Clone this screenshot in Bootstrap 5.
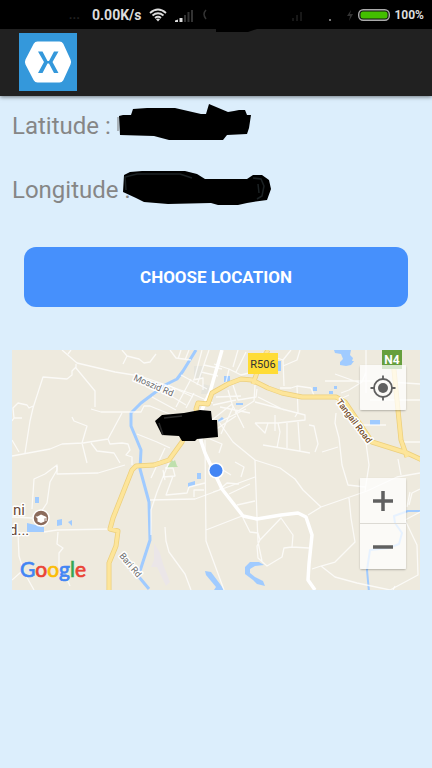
<!DOCTYPE html>
<html lang="en">
<head>
<meta charset="utf-8">
<meta name="viewport" content="width=device-width, initial-scale=1">
<title>Choose location</title>
<link href="https://cdn.jsdelivr.net/npm/bootstrap@5.3.0/dist/css/bootstrap.min.css" rel="stylesheet">
<style>
  body { background: #dceefc; font-family: Roboto, "Liberation Sans", sans-serif; }
  .status-bar { background: #000; color: #dcdcdc; height: 29px; font-size: 14px; font-weight: 700; line-height: 16px; padding: 1px 8px 0; }
  .status-faint { color: #222; font-size: 13px; flex: 0 0 76px; }
  .status-pct { font-size: 12px; }
  .app-bar { background: #212121; height: 67px; padding: 0 19px 1px; box-shadow: 0 1px 4px rgba(0,0,0,.5); }
  .page-body { padding: 14px 12px 0; }
  .coord { height: 32px; line-height: 32px; font-size: 24px; color: #868686; margin-bottom: 32px; }
  .coord svg { top: -6px; left: 104px; }
  .btn-choose { --bs-btn-bg: #4690fc; --bs-btn-color: #fff; --bs-btn-hover-bg: #3580ee; --bs-btn-hover-color: #fff; --bs-btn-active-bg: #3580ee; --bs-btn-active-color: #fff; height: 60px; border: 0; border-radius: 12px; font-size: 17px; font-weight: 700; padding: 8px 0 6px; }
  .choose-wrap { padding: 9px 12px 43px; }
  .map-view { height: 240px; background: #eeeade; }
  .map-view text { font-family: Roboto, "Liberation Sans", sans-serif; }
  .map-view .map-brand { font-family: Lato, "Liberation Sans", sans-serif; }
  .map-btn { width: 46px; height: 45px; border: 0; background: rgba(255,255,255,.75); }
  .map-panel { right: 14px; border-radius: 2px; box-shadow: 0 1px 2px rgba(0,0,0,.25); }
  .panel-top { top: 15px; }
  .panel-bottom { bottom: 21px; }
  .zoom-in { border-bottom: 1px solid #dcdad4; height: 46px; }
</style>
<script src="https://cdn.jsdelivr.net/npm/bootstrap@5.3.0/dist/js/bootstrap.bundle.min.js"></script>
</head>
<body>
<div class="status-bar d-flex align-items-center">
  <span class="status-faint text-end pe-1 me-2">...</span>
  <span class="me-2">0.00K/s</span>
  <svg width="18" height="14" viewBox="0 0 18 14" fill="none" stroke="#ddd" stroke-width="1.8" aria-label="Wi-Fi"><path d="M1 5Q9-2 17 5M3.500 7.500Q9 3 14.500 7.500M6 10Q9 7.500 12 10"/><path d="M7 11.200Q9 9.800 11 11.200L9 13.500Z" fill="#ddd" stroke="none"/></svg>
  <svg class="ms-2" width="19" height="13" viewBox="0 0 19 13" aria-label="Signal"><path d="M0 13v-1.500l3-1V13z M4.500 13V9h3v4z" fill="#ddd"/><path d="M9 13V6h2v7zM12.500 13V3h2v10zM16 13V1h2v12z" fill="#333"/></svg>
  <svg class="ms-2 flex-fill" width="150" height="16" viewBox="0 0 150 16" preserveAspectRatio="xMaxYMid meet" aria-hidden="true"><path d="M2 3Q-2 7 2 12" stroke="#333" fill="none" stroke-width="1.500"/><path d="M88 14v-3h2v3zM92 14V8h2v6zM96 14V5h2v9z" fill="#181818"/><rect x="125" y="12" width="2" height="2" fill="#777"/><path d="M147 3l-4 6h3l-1 5 4-7h-3z" fill="#333"/></svg>
  <svg class="ms-1" width="32" height="12" viewBox="0 0 32 12" aria-label="Battery"><rect x=".7" y=".7" width="30.600" height="10.600" rx="4.500" fill="#111" stroke="#aaa" stroke-width="1.400"/><rect x="2.500" y="2.500" width="27" height="7" rx="2.500" fill="#43be00"/></svg>
  <span class="ms-1 status-pct">100%</span>
</div>
<header class="app-bar d-flex align-items-center position-relative">
  <svg width="58" height="58" viewBox="0 0 58 58" role="img" aria-label="App logo"><rect width="58" height="58" fill="#3498db"/><path d="M18.500 8.500h22Q43 8.500 44.300 10.800L51.500 26.500Q52.700 29 51.500 31.500L44.300 47.200Q43 49.500 40.500 49.500H18.500Q16 49.500 14.700 47.200L6.500 31.500Q5.300 29 6.500 26.500L14.700 10.800Q16 8.500 18.500 8.500z" fill="#fff"/><path d="M19 18.500h4.500L28.500 28h1.500L35 18.500h4.500L33.500 29l6 11H35l-5-9.500h-1.500L23.500 40H19l6-11z" fill="#3498db"/></svg>
  <svg class="position-absolute top-0 start-50" width="50" height="4" viewBox="0 0 50 4" aria-hidden="true"><path d="M0 0h41l-9 3H0z" fill="#000"/></svg>
</header>
<main class="page-body">
  <div class="coord position-relative">Latitude :
    <svg class="position-absolute" width="160" height="40" viewBox="116 104 160 40" aria-hidden="true"><path d="M119 116l4-1 8 0 2-6 14-1h28l26 6 5 0 3-10 19 8 6-1 5-1 6 0 2 5 4 0-2 13-2 6-20 1-4 5h-54l-15-4-34-1z" fill="#000"/><path d="M118 117v14" stroke="#777" stroke-opacity=".5" stroke-width="2"/></svg>
  </div>
  <div class="coord position-relative">Longitude :
    <svg class="position-absolute" width="160" height="40" viewBox="116 168 160 40" aria-hidden="true"><path d="M124 175l6-3 12-1h43l12 3 8 5 42 0 6-4 9 0 7 5 2 9-4 11-14 2-6 1-9 2h-20l-7-2-43 1-24-2-8-4-13-6z" fill="#000"/><path d="M126 190l-1-13 12-3h43l12 4M253 178l8 1 3 7-2 10-5 3M258 184l1 9" fill="none" stroke="#1c2224" stroke-width="1.500"/></svg>
  </div>
  <div class="choose-wrap"><button type="button" class="btn btn-choose w-100">CHOOSE LOCATION</button></div>
  <section class="map-view position-relative overflow-hidden" aria-label="Map">
    <svg class="d-block w-100 h-100" viewBox="12 350 408 240" preserveAspectRatio="xMidYMid slice">
      <g fill="#a0cbff">
        <path d="M334 350h17l-1 5 3 3-1 3 2 0-3 4-5 1-6-1v-3l3-3-2-5-6-1z"/>
        <path d="M370 420h10v5h-10zM313 387h4v4h-4zM329 391h4v3h-4zM334 386h3v3h-3zM329 396h3v3h-3zM224 376h6v6h-6zM236 403h7v2h-7zM218 420l4-3 2 2-5 4zM278 361h3v10h-3zM188 483l7-2v4l-7 2zM197 473h4v6h-4zM35 497h4v6h-4zM27 523l17 4v5H27zM57 520l5-1v6l-5 1zM68 522l4-2v6z"/>
        <path d="M205 571l6 1 9 12 4 6h-10l2-3-10-12z"/>
        <path d="M264 565l-5-3-9 0-5 5 0 7 8 6 4 4 8 2-2-5-8-4-5-4 0-4 5-3z"/>
      </g>
      <path d="M154 543l6 10 3 11 7 18-4 4-9-19-6 0 3-7z" fill="#ebe6e8"/>
      <path d="M194 366h9l-1 12h-8zM203 384l8 2-2 8-8 0z" fill="#e5e4dc"/>
      <path d="M167 468l5-8 6 7-3 0zM171 463l4-3 2 6z" fill="#bfe0ad"/>
      <g fill="none" stroke="#a0cbff" stroke-linejoin="round">
        <path d="M196 350l-13 21-6 8-12 6-24 18-10 10v13l10 24-1 19 9 33 1 38-10 31-1 6 10 12" stroke-width="3"/>
        <path d="M420 511h-12l-14 5 1 7 7 10-3 11-10 4-19 2-3 20 2 22" stroke-width="2"/>
      </g>
      <g fill="none" stroke="#fff" stroke-opacity=".75" stroke-width="1.300" stroke-linejoin="round">
        <path d="M62 350l15 13 38 9 25 4 55 19 18 8M71 350l-3 4M76 364l0 4 19 23v16M76 367l-4 4 0 4-5 4-24-2-10 31-3 13-5 32M12 456l38-7 12-5 21-1 25-4 14-26M12 440l7 12M12 421l2-3h8M14 418l-1-10 5-5 9 2 2 3 4-2M72 417l2 4 13 5-5 17 5 20M91 409l10 3h40l3-6 6 0 22 9M91 443l6 8 17 2 6 10M108 439l2 5 12-1 6 1 2 6-4 5 6 2v8M45 474l12-9v9l41-1 27-8M122 350l5 6 12 3 5 4 6-1 6-8M127 356l-4 8"/>
        <path d="M57 466v4l-7 12-3 21-6 9M45 474l-11 5-2 30M12 517l20 1M44 532l13-2 55-1M58 532l-1 12 6 4-4 5v14l8 12 3 7M18 534l1 22 5 16 10 18M12 580l9-8"/>
        <path d="M137 434l20 8 13 6M165 448l-14 30M169 462l-12 30-6 18v25"/>
        <path d="M152 397l24 13M161 390l25 15M168 385l25 12M181 375l26 14M170 350l6 8 15 2M181 350l-3 9M189 350l-4 10M176 407l15-28M186 408l8-15M193 380l10-2v12M202 350l-8 30M209 350l-12 35M204 365l18 4M201 372l17 4"/>
        <path d="M214 364l15 5-4 18M229 369l12 6 8-2M238 350l-5 17M246 352l-10 20M258 364l16 5M262 353l21 7M228 390l5 17-12 27M216 397l25-1M213 405l23-5M233 385l5 15 18-3 1-8M255 385l-1 16-19 12M220 407l30 6M212 420l20-16 12 24M219 422l27-13M206 433l12-5 18-12M210 439l12 5-3 9"/>
        <path d="M280 388l11 0 6-2 14 2 4 10M297 386l1 26-3 5M291 350l-8 10 1 26M300 350l-3 10-14 6M255 402l50 13v5l-27 3h-23M275 415v16M255 423l10 10 3-10M278 423l2 9-3 16M287 423v25M298 422l2 29M309 425l5 1 4 18-3 8M263 445l36 6 11 2M322 452l16-5M258 397l26 13"/>
        <path d="M341 393l8-3 13-8 4-10v-22M335 374l25 9M336 401l13-6M336 413l-1 10 4 15 3 27 6 20 17 2M366 443l3 22-4 26M366 393v-43M325 381h50l45 3M370 400h50M360 425h26M404 442h16M398 459l3 16"/>
        <path d="M219 422l14 20 22 18 25 8 15 11 8 11 18 17M308 515l13-8 46-16 30-14 23-4M255 460l2 58 1 24 4 19M205 440l1 101 18 49M206 530l36-14M243 518l7 14 8 1 2 7M260 540l21-22 12 17-1 12 17 1M260 540l-3 6 1 12 9 8 15-9 2-9 8-1M349 498l2 20 4 24-20 20-14 4-9 3M321 566l14 11 22 6 33 7 28-15-1-30-12-25 15-8"/>
        <path d="M163 470l2 10M165 468l8 0 2 8-12 1M173 476l-7 19 21-2 2-6 16-4M150 500l45-1 60-22M194 497v-7h10M213 492l6-2 8-7 12 1M229 494l21-10M237 505l18-4M223 470l8 5M235 462l9 5-3 10M165 527l1 14 3 11 16 22 6 16M409 505l3-12 8-4M410 492l-3 15M393 590l2-4"/>
      </g>
      <path d="M222 350l-12 42-9 20 0 29 4 12 17 36 21 27 14 3 24-4 17-2 8 4 6 18-3 29-1 16 7 10" fill="none" stroke="#fff" stroke-width="3.500" stroke-linejoin="round"/>
      <g fill="none" stroke-linejoin="round">
        <path d="M109 590v-27l7-17 2-15-8-2 3-11 19-48 4-4 18-1 15-5 13-18 15-30-1-3 2-6 10 1 4-11 16-9 13-5 11 1 16 8 14 5 20 4h34l9 5 27 40 35 11 15 7M392 350l5 50 4 40 6 17M253 384l7-20 8-14" stroke="#eccf7c" stroke-width="5"/>
        <path d="M109 590v-27l7-17 2-15-8-2 3-11 19-48 4-4 18-1 15-5 13-18 15-30-1-3 2-6 10 1 4-11 16-9 13-5 11 1 16 8 14 5 20 4h34l9 5 27 40 35 11 15 7M392 350l5 50 4 40 6 17M253 384l7-20 8-14" stroke="#fde59a" stroke-width="3.500"/>
      </g>
      <g stroke="#fff" stroke-width="3" stroke-linejoin="round" paint-order="stroke">
        <text transform="translate(133 380) rotate(23)" font-size="9" fill="#6b6b6b">Moszid Rd</text>
        <text transform="translate(119 556) rotate(50)" font-size="9" fill="#6b6b6b">Bari Rd</text>
        <text transform="translate(336 402) rotate(53)" font-size="9" font-weight="500" fill="#754f2d">Tangail Road</text>
        <text x="13" y="515" font-size="15" fill="#6b4c3a">ni</text>
        <text x="9" y="535" font-size="15" fill="#6b4c3a">d...</text>
      </g>
      <path d="M155 421l7-6 22-2 16-3 11 1 1 9 5 0 1 17-21 2-2 2h-13l-3-5-17-1z"/>
      <path d="M159 423l4 12M164 418l18-2" fill="none" stroke="#2b2b2b" stroke-width="1.500"/>
      <rect x="248" y="353" width="30" height="21" fill="#ffdc35"/>
      <text x="263" y="368" font-size="11" text-anchor="middle" fill="#333">R506</text>
      <rect x="382" y="350" width="20" height="19" fill="#669f3d"/>
      <text x="392" y="364" font-size="12" font-weight="700" text-anchor="middle" fill="#fff">N4</text>
      <circle cx="41" cy="518" r="8" fill="#8b6b5c" stroke="#fff" stroke-width="1.500"/>
      <path d="M35.500 516.500h2l3.500-2 5.500 2.500v4l-1 0v-3l-1 .5v3l-3.500 1.500-3.500-1.500v-3z" fill="#fff"/>
      <circle cx="216" cy="470.500" r="8" fill="#fff"/><circle cx="216" cy="470.500" r="6.500" fill="#4285f4"/>
      <g class="map-brand"><text class="map-brand" x="20" y="577" font-size="21" stroke-width=".7"><tspan fill="#4285f4" stroke="#4285f4">G</tspan><tspan fill="#ea4335" stroke="#ea4335">o</tspan><tspan fill="#fbbc05" stroke="#fbbc05">o</tspan><tspan fill="#4285f4" stroke="#4285f4">g</tspan><tspan fill="#34a853" stroke="#34a853">l</tspan><tspan fill="#ea4335" stroke="#ea4335">e</tspan></text></g>
    </svg>
    <div class="map-panel panel-top position-absolute">
      <button type="button" class="map-btn d-flex align-items-center justify-content-center p-0" aria-label="My location"><svg width="26" height="26" viewBox="0 0 26 26" fill="none" stroke="#606060" stroke-width="1.800"><circle cx="13" cy="13" r="9"/><circle cx="13" cy="13" r="5" fill="#606060" stroke="none"/><path d="M13 .5V5M13 21v4.500M.5 13H5M21 13h4.500"/></svg></button>
    </div>
    <div class="map-panel panel-bottom position-absolute">
      <button type="button" class="map-btn zoom-in d-flex align-items-center justify-content-center p-0" aria-label="Zoom in"><svg width="22" height="22" viewBox="0 0 22 22" stroke="#606060" stroke-width="3.500"><path d="M1 11h20M11 1v20"/></svg></button>
      <button type="button" class="map-btn d-flex align-items-center justify-content-center p-0" aria-label="Zoom out"><svg width="22" height="22" viewBox="0 0 22 22" stroke="#606060" stroke-width="3.500"><path d="M1 11h20"/></svg></button>
    </div>
  </section>
</main>
</body>
</html>
